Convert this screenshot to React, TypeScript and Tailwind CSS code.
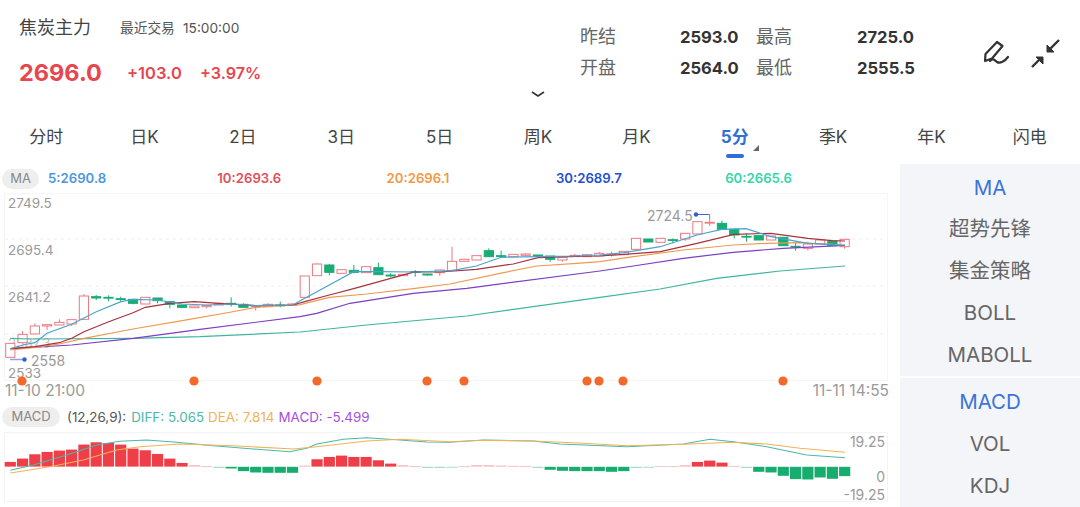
const FONT = '"Inter", "Noto Sans", "Noto Sans CJK SC", sans-serif';

const tabs = ['分时', '日K', '2日', '3日', '5日', '周K', '月K', '5分', '季K', '年K', '闪电'];
const overlays = ['MA', '超势先锋', '集金策略', 'BOLL', 'MABOLL'];
const subs = ['MACD', 'VOL', 'KDJ'];

const legend = [
  { label: '5:2690.8', color: 'text-[#4f96dc]' },
  { label: '10:2693.6', color: 'text-[#e2505a]' },
  { label: '20:2696.1', color: 'text-[#f09a45]' },
  { label: '30:2689.7', color: 'text-[#2450cf]' },
  { label: '60:2665.6', color: 'text-[#35d6ad]' },
];

// candle values were read off 3x crops, y = 190 + v / 3
// [top, bottom, wickTop, wickBottom, up]
const candles: [number, number, number, number, number][] = [
  [460, 502, 460, 502, 1], [433, 458, 423, 458, 1], [408, 432, 400, 432, 1], [404, 408, 404, 420, 1],
  [397, 405, 388, 405, 1], [389, 402, 389, 408, 1], [318, 388, 312, 388, 1], [320, 324, 315, 330, 0],
  [322, 324, 316, 334, 0], [326, 328, 320, 336, 0], [328, 340, 328, 343, 0], [322, 342, 322, 342, 1],
  [324, 332, 324, 340, 0], [335, 343, 335, 355, 0], [345, 352, 345, 352, 0], [348, 353, 348, 353, 1],
  [346, 350, 346, 355, 1], [340, 345, 340, 345, 1], [340, 342, 322, 350, 0], [343, 352, 340, 352, 0],
  [348, 350, 348, 362, 1], [343, 350, 340, 350, 1], [345, 347, 335, 352, 0], [342, 346, 340, 346, 1],
  [258, 322, 258, 322, 1], [222, 257, 220, 257, 1], [225, 247, 222, 256, 0], [239, 250, 239, 250, 1],
  [241, 247, 225, 250, 0], [230, 248, 230, 248, 1], [233, 254, 218, 254, 0], [255, 258, 250, 262, 0],
  [253, 257, 253, 257, 1], [245, 247, 240, 260, 0], [252, 255, 252, 257, 0], [240, 248, 240, 258, 1],
  [214, 241, 170, 241, 1], [208, 214, 206, 216, 1], [197, 210, 197, 210, 1], [182, 200, 175, 200, 0],
  [197, 199, 182, 200, 0], [193, 200, 193, 200, 1], [192, 196, 190, 196, 1], [195, 198, 195, 198, 0],
  [198, 208, 198, 215, 0], [202, 210, 202, 215, 1], [196, 200, 192, 200, 1], [194, 200, 194, 200, 1],
  [190, 198, 186, 198, 1], [192, 194, 185, 200, 1], [184, 194, 184, 194, 1], [145, 178, 145, 178, 1],
  [147, 156, 147, 156, 0], [145, 157, 145, 157, 1], [149, 151, 145, 160, 0], [130, 147, 130, 153, 1],
  [95, 132, 95, 132, 1], [97, 99, 72, 108, 1], [100, 118, 92, 118, 0], [118, 135, 118, 145, 0],
  [139, 141, 130, 155, 0], [137, 150, 137, 150, 0], [138, 150, 138, 150, 1], [142, 167, 142, 167, 0],
  [169, 171, 157, 182, 0], [162, 175, 155, 182, 1], [150, 162, 150, 162, 1], [153, 167, 153, 167, 0],
  [148, 170, 148, 176, 1],
];

const cx = (i: number) => 10.3 + 12.27 * i;

const pts = (ox: number, oy: number, raw: number[][]) =>
  raw.map(([x, y]) => `${(ox + x / 3).toFixed(1)},${(oy + y / 3).toFixed(1)}`).join(' ');

const maLines = [
  {
    color: '#3fb5a0',
    p: [
      pts(0, 190, [[31, 445], [100, 447], [400, 445], [600, 440], [900, 426]]),
      pts(300, 190, [[200, 405], [500, 378], [900, 322]]),
      pts(600, 190, [[180, 297], [350, 265], [540, 243], [735, 228]]),
    ],
  },
  {
    color: '#7c3fc4',
    p: [
      pts(0, 190, [[31, 476], [215, 465], [400, 445], [600, 418], [900, 380]]),
      pts(300, 190, [[50, 370], [150, 340], [340, 310], [500, 295], [900, 243]]),
      pts(600, 190, [[100, 228], [250, 205], [400, 187], [550, 175], [735, 166]]),
    ],
  },
  {
    color: '#ee9a52',
    p: [
      pts(0, 190, [[31, 480], [105, 472], [178, 462], [252, 445], [399, 417], [547, 392], [694, 366], [768, 352], [842, 347], [900, 344]]),
      pts(300, 190, [[88, 322], [200, 312], [340, 296], [450, 282], [600, 250], [710, 228], [830, 220], [900, 215]]),
      pts(600, 190, [[100, 200], [250, 180], [400, 165], [500, 160], [600, 158], [735, 165]]),
    ],
  },
  {
    color: '#a8323c',
    p: [
      pts(0, 190, [[31, 476], [105, 470], [178, 458], [215, 445], [252, 425], [326, 395], [399, 368], [436, 352], [510, 340], [583, 335], [657, 340], [768, 347], [878, 345]]),
      pts(300, 190, [[14, 335], [88, 315], [161, 296], [272, 265], [346, 245], [419, 246], [529, 238], [640, 222], [714, 203], [825, 199], [898, 198]]),
      pts(600, 190, [[72, 193], [181, 185], [291, 160], [402, 133], [513, 130], [623, 145], [697, 152], [735, 153]]),
    ],
  },
  {
    color: '#4aa3cf',
    p: [
      pts(0, 190, [[31, 476], [68, 465], [105, 458], [141, 430], [215, 403], [289, 365], [363, 335], [399, 328], [473, 330], [547, 342], [620, 345], [694, 342], [768, 347], [878, 345]]),
      pts(300, 190, [[14, 325], [51, 305], [88, 285], [161, 245], [235, 245], [346, 246], [455, 242], [529, 228], [603, 202], [714, 200], [825, 198], [898, 195]]),
      pts(600, 190, [[72, 188], [181, 170], [291, 135], [365, 118], [438, 116], [513, 140], [623, 160], [735, 166]]),
    ],
  },
];

const dots = [22, 194, 317, 427, 464, 587, 599, 623, 783];

// macd bars, positive = red above zero, negative = green, in 3x crop px
const macd = [
  14, 24, 37, 44, 48, 51, 66, 73, 71, 66, 54, 49, 38, 24, 11, 4, 1, -3, -5, -13, -17, -18, -18, -18,
  3, 22, 29, 33, 29, 29, 19, 9, 4, 1, -3, -3, -2, 1, 4, 4, 3, 2, 1, -3, -9, -12, -13, -13, -13, -15,
  -13, -3, -1, 1, 1, 4, 14, 18, 12, 2, -3, -15, -17, -27, -37, -38, -32, -36, -28,
];

const diff = [
  pts(0, 395, [[31, 226], [100, 210], [200, 180], [290, 150], [360, 139], [440, 135], [530, 142], [640, 152], [760, 162], [870, 170], [920, 160], [950, 147], [1030, 133], [1100, 128], [1200, 135], [1280, 141], [1350, 142]]),
  pts(450, 395, [[100, 135], [250, 138], [330, 147], [530, 155], [700, 147], [780, 133], [850, 140], [950, 155], [1070, 180], [1185, 188]]),
];
const dea = [
  pts(0, 395, [[31, 234], [150, 215], [250, 195], [350, 165], [420, 155], [540, 147], [700, 152], [880, 162], [950, 155], [1100, 138], [1200, 133], [1350, 140]]),
  pts(450, 395, [[100, 136], [250, 138], [400, 145], [530, 152], [700, 148], [850, 142], [950, 147], [1050, 160], [1185, 172]]),
];

function PriceChart() {
  return (
    <svg viewBox="0 193 900 212" className="block h-[212px] w-[900px]">
      <rect x="4.5" y="193.5" width="883" height="187" fill="none" stroke="#f5f5f5" />
      {[239, 286, 334].map((y) => (
        <line key={y} x1="5" x2="887" y1={y} y2={y} stroke="#eeeeee" strokeDasharray="3 4" />
      ))}
      <g fill="#9a9a9a" fontSize="13.5">
        <text x="8" y="208">2749.5</text>
        <text x="8" y="255">2695.4</text>
        <text x="8" y="302">2641.2</text>
        <text x="8" y="348" fill="#c4c4c4">2587.3</text>
        <text x="8" y="378">2533</text>
        <text x="31" y="365.5" fontSize="14">2558</text>
        <text x="647" y="221" fontSize="14">2724.5</text>
        <text x="5" y="396" fontSize="15.5">11-10 21:00</text>
        <text x="889" y="396" fontSize="15.5" textAnchor="end">11-11 14:55</text>
      </g>
      <path d="M10 359.5H24" stroke="#8aa6e0" strokeWidth="1.5" />
      <circle cx="24.5" cy="359.5" r="2.2" fill="#2f5fd0" />
      <path d="M696 214.5H709.5V219" stroke="#3a66cf" fill="none" />
      <circle cx="696" cy="214.5" r="2.2" fill="#2f5fd0" />
      {candles.map(([top, bot, wt, wb, up], i) => {
        const x = cx(i);
        const y1 = 190 + top / 3;
        const y2 = 190 + bot / 3;
        const color = up ? '#ec7a80' : '#17ad74';
        return (
          <g key={i}>
            <line x1={x} x2={x} y1={190 + wt / 3} y2={190 + wb / 3} stroke={color} />
            <rect
              x={x - 4.6}
              y={y1}
              width="9.2"
              height={Math.max(y2 - y1, 0.8)}
              fill={up ? '#ffffff' : color}
              stroke={color}
            />
          </g>
        );
      })}
      {maLines.map((l) => (
        <polyline key={l.color} points={l.p.join(' ')} fill="none" stroke={l.color} strokeWidth="1.2" />
      ))}
      {dots.map((x) => (
        <circle key={x} cx={x} cy="381" r="4.6" fill="#f4692b" />
      ))}
    </svg>
  );
}

function MacdChart() {
  return (
    <svg viewBox="0 429 900 78" className="block h-[78px] w-[900px]">
      <rect x="4.5" y="432.5" width="883" height="69" fill="none" stroke="#f4f4f4" />
      {macd.map((v, i) => {
        const h = Math.abs(v) / 3;
        const thin = h < 1.5;
        const y = v > 0 ? 466.6 - h : 466.8;
        return (
          <rect
            key={i}
            x={cx(i) - 5.6}
            y={y}
            width="11.2"
            height={Math.max(h, 0.8)}
            fill={v > 0 ? (thin ? '#f2b6ba' : '#ef3e48') : thin ? '#8fd5ba' : '#17ad6f'}
          />
        );
      })}
      <polyline points={diff.join(' ')} fill="none" stroke="#4bb8ab" strokeWidth="1.1" />
      <polyline points={dea.join(' ')} fill="none" stroke="#efb35a" strokeWidth="1.1" />
      <g fill="#9a9a9a" fontSize="14" textAnchor="end">
        <text x="885" y="447">19.25</text>
        <text x="885" y="482">0</text>
        <text x="885" y="500">-19.25</text>
      </g>
    </svg>
  );
}

export default function App() {
  return (
    <div className="h-[507px] w-[1080px] overflow-hidden bg-white" style={{ fontFamily: FONT }}>
      {/* Header */}
      <div className="relative flex h-[122px]">
        <div className="w-[580px] pl-[19px] pt-[17px]">
          <div className="flex items-center">
            <span className="w-[101px] text-[18px] leading-[22px] text-[#444]">焦炭主力</span>
            <span className="w-[63px] text-[13.7px] leading-[22px] text-[#555]">最近交易</span>
            <span className="text-[13.7px] leading-[22px] text-[#555]">15:00:00</span>
          </div>
          <div className="mt-[19px] flex items-center">
            <span className="w-[108px] text-[23.5px] font-bold leading-[30px] text-[#e8464f]">2696.0</span>
            <span className="w-[73px] text-[16.5px] font-semibold text-[#e8464f]">+103.0</span>
            <span className="text-[16.2px] font-semibold text-[#e8464f]">+3.97%</span>
          </div>
        </div>
        <div className="grid h-fit w-[372px] grid-cols-[100px_76px_101px_1fr] gap-y-[9px] pt-[26px] leading-[22px]">
          <span className="text-[18px] text-[#666]">昨结</span>
          <span className="text-[16.6px] font-bold text-[#333]">2593.0</span>
          <span className="text-[18px] text-[#666]">最高</span>
          <span className="text-[16.6px] font-bold text-[#333]">2725.0</span>
          <span className="text-[18px] text-[#666]">开盘</span>
          <span className="text-[16.6px] font-bold text-[#333]">2564.0</span>
          <span className="text-[18px] text-[#666]">最低</span>
          <span className="text-[16.6px] font-bold text-[#333]">2555.5</span>
        </div>
        <div className="flex items-start gap-[20px] pl-[29px] pt-[37px]">
          <svg width="28" height="32" viewBox="0 0 28 32" fill="none" stroke="#333" strokeWidth="2.2" strokeLinejoin="round" strokeLinecap="round">
            <path d="M16 5 L21.5 9 L11 21.5 L4 24 L4.5 17 Z" />
            <path d="M9 24 C12 21 14 23 16 25 C19 27 24 24 27 20" />
          </svg>
          <svg width="32" height="32" viewBox="0 0 32 32" fill="#333" stroke="#333" strokeWidth="2.4">
            <path d="M30 3 L20 13" fill="none" />
            <path d="M18 15 L18 8 L25 15 Z" strokeWidth="1" />
            <path d="M3 30 L12 21" fill="none" />
            <path d="M14 20 L14 27 L7 20 Z" strokeWidth="1" />
          </svg>
        </div>
        <svg className="absolute left-[531px] top-[91px]" width="14" height="7" viewBox="0 0 14 7" fill="none" stroke="#333" strokeWidth="1.6">
          <path d="M1 1 L7 5 L13 1" />
        </svg>
      </div>

      {/* Period tabs */}
      <div className="-ml-[3px] grid h-[42px] w-[1082px] grid-cols-11">
        {tabs.map((t) => (
          <div key={t} className="relative flex items-center justify-center pb-[10px]">
            <span className={t === '5分' ? 'text-[17px] font-bold text-[#2f6fd6]' : 'text-[17px] text-[#444]'}>{t}</span>
            {t === '5分' && (
              <>
                <span className="absolute left-[40px] top-[32px] h-[4px] w-[18px] rounded-full bg-[#2f6fd6]" />
                <span className="absolute left-[67px] top-[23px] h-0 w-0 border-b-[6px] border-l-[6px] border-b-[#666] border-l-transparent" />
              </>
            )}
          </div>
        ))}
      </div>

      <div className="flex">
        {/* Charts */}
        <div className="w-[900px]">
          <div className="flex h-[29px] items-center pl-[2px]">
            <span className="flex h-[20px] w-[37px] items-center justify-center rounded-full bg-[#eeeeee] text-[13px] text-[#888]">MA</span>
            <div className="ml-[9px] flex">
              {legend.map((l) => (
                <span key={l.label} className={`w-[169.3px] text-[13.2px] font-semibold ${l.color}`}>{l.label}</span>
              ))}
            </div>
          </div>
          <PriceChart />
          <div className="flex h-[24px] items-center pl-[2px] text-[13.4px]">
            <span className="flex h-[20px] w-[58px] items-center justify-center rounded-full bg-[#eeeeee] text-[13px] text-[#888]">MACD</span>
            <span className="ml-[7px] text-[#555]">(12,26,9):</span>
            <span className="ml-[5px] text-[#4bb8ab]">DIFF: 5.065</span>
            <span className="ml-[4px] text-[#efb35a]">DEA: 7.814</span>
            <span className="ml-[4px] text-[#a64fdc]">MACD: -5.499</span>
          </div>
          <MacdChart />
        </div>

        {/* Indicator switcher */}
        <div className="flex w-[180px] flex-col gap-[2px] bg-white text-[20.5px] text-[#666]">
          <div className="flex h-[212px] flex-col bg-[#f4f5f9] pt-[3px]">
            {overlays.map((o) => (
              <div key={o} className={o === 'MA' ? 'flex h-[42.3px] items-center justify-center text-[#3b74d6]' : 'flex h-[42.3px] items-center justify-center'}>{o}</div>
            ))}
          </div>
          <div className="flex h-[129px] flex-col bg-[#f4f5f9] pt-[4px]">
            {subs.map((o) => (
              <div key={o} className={o === 'MACD' ? 'flex h-[42.5px] items-center justify-center text-[#3b74d6]' : 'flex h-[42.5px] items-center justify-center'}>{o}</div>
            ))}
          </div>
        </div>
      </div>
    </div>
  );
}
